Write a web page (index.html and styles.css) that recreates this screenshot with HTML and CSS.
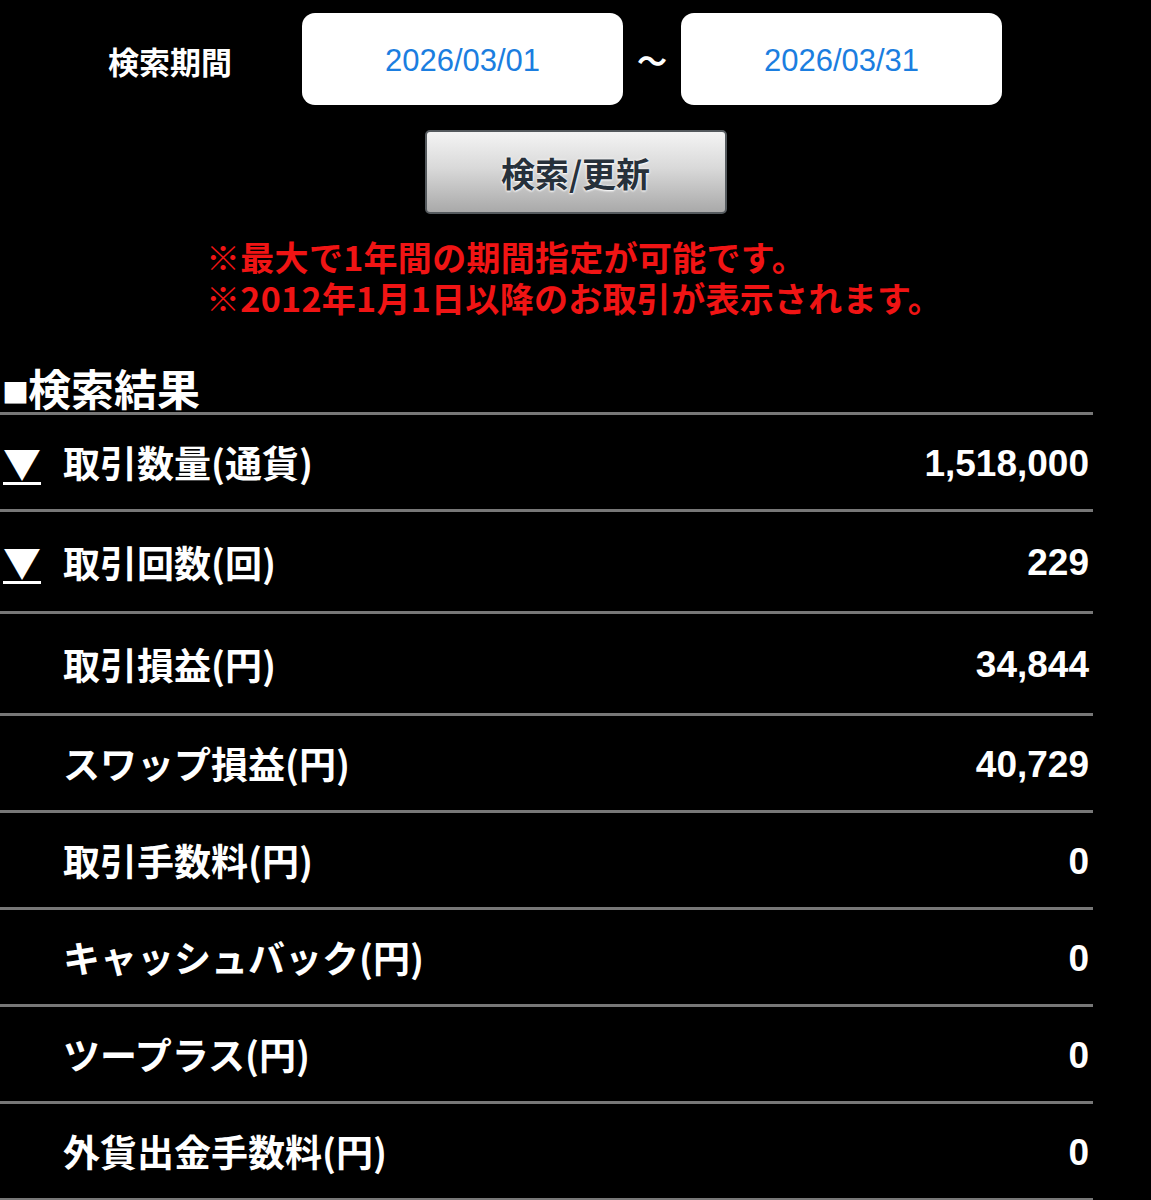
FILE: index.html
```html
<!DOCTYPE html>
<html lang="ja">
<head>
<meta charset="utf-8">
<title>取引集計</title>
<link rel="stylesheet" href="styles.css">
</head>
<body>
<div class="page">
  <div class="period">
    <div class="period-label">検索期間</div>
    <div class="date-box">2026/03/01</div>
    <div class="tilde">〜</div>
    <div class="date-box">2026/03/31</div>
  </div>
  <div class="btn-wrap">
    <div class="btn">検索/更新</div>
  </div>
  <div class="notes">
    <p>※最大で1年間の期間指定が可能です。</p>
    <p>※2012年1月1日以降のお取引が表示されます。</p>
  </div>
  <div class="results">
    <h2 class="results-title"><span class="sq">■</span>検索結果</h2>
    <div class="row">
      <div class="arrow"><span class="tri">▼</span></div>
      <div class="label">取引数量(通貨)</div>
      <div class="value">1,518,000</div>
    </div>
    <div class="row row-tall">
      <div class="arrow"><span class="tri">▼</span></div>
      <div class="label">取引回数(回)</div>
      <div class="value">229</div>
    </div>
    <div class="row row-tall">
      <div class="arrow"></div>
      <div class="label">取引損益(円)</div>
      <div class="value">34,844</div>
    </div>
    <div class="row">
      <div class="arrow"></div>
      <div class="label">スワップ損益(円)</div>
      <div class="value">40,729</div>
    </div>
    <div class="row">
      <div class="arrow"></div>
      <div class="label">取引手数料(円)</div>
      <div class="value">0</div>
    </div>
    <div class="row">
      <div class="arrow"></div>
      <div class="label">キャッシュバック(円)</div>
      <div class="value">0</div>
    </div>
    <div class="row">
      <div class="arrow"></div>
      <div class="label">ツープラス(円)</div>
      <div class="value">0</div>
    </div>
    <div class="row">
      <div class="arrow"></div>
      <div class="label">外貨出金手数料(円)</div>
      <div class="value">0</div>
    </div>
  </div>
</div>
</body>
</html>
```

FILE: styles.css
```css
html, body {
  margin: 0;
  padding: 0;
  background: #000;
}
body {
  color: #fff;
  font-family: "Noto Sans CJK JP", "Liberation Sans", sans-serif;
}
.page {
  width: 1151px;
  padding-top: 13px;
}
.period {
  display: flex;
  align-items: center;
  height: 92px;
  padding-left: 108px;
}
.period-label {
  width: 194px;
  font-size: 31px;
  font-weight: 700;
  padding-top: 2px;
}
.date-box {
  width: 321px;
  height: 92px;
  background: #fff;
  border-radius: 13px;
  display: flex;
  align-items: center;
  justify-content: center;
  color: #1b7ee0;
  font-family: "Liberation Sans", Arial, sans-serif;
  font-size: 31px;
  padding-top: 3px;
  box-sizing: border-box;
}
.tilde {
  width: 58px;
  text-align: center;
  font-size: 30px;
  font-weight: 700;
  color: #fff;
}
.btn-wrap {
  display: flex;
  justify-content: center;
  margin-top: 25px;
}
.btn {
  width: 298px;
  height: 80px;
  border: 2px solid #555a5e;
  border-radius: 5px;
  background: linear-gradient(#f4f4f4, #d9d9d9 45%, #a9a9a9);
  display: flex;
  align-items: center;
  justify-content: center;
  color: #27313b;
  font-size: 34px;
  font-weight: 700;
  text-shadow: 0 0 3px #fff, 0 1px 2px #fff;
}
.notes {
  margin-top: 22px;
  padding-left: 206px;
  color: #f01414;
  font-size: 34px;
  line-height: 41px;
  font-weight: 700;
  letter-spacing: 0.3px;
}
.notes p {
  margin: 0;
  height: 41px;
}
.results {
  width: 1093px;
  margin-top: 44px;
}
.results-title {
  margin: 0;
  height: 50px;
  line-height: 50px;
  font-size: 43px;
  font-weight: 700;
  border-bottom: 3px solid #777;
  padding-left: 2px;
  display: flex;
  align-items: flex-end;
}
.sq {
  font-size: 27px;
  line-height: 40px;
  margin-right: -1px;
}
.row {
  box-sizing: border-box;
  height: 97px;
  border-bottom: 3px solid #777;
  display: grid;
  grid-template-columns: 63px 1fr auto;
  align-items: center;
}
.row-tall {
  height: 102px;
}
.arrow {
  padding-left: 3px;
}
.tri {
  font-size: 38px;
  line-height: 40px;
  text-decoration: underline;
  text-decoration-thickness: 3px;
  text-underline-offset: 4px;
}
.label {
  font-size: 37px;
  font-weight: 700;
}
.value {
  font-family: "Liberation Sans", Arial, sans-serif;
  font-size: 37px;
  font-weight: 700;
  padding-right: 4px;
  padding-top: 3px;
}
```
